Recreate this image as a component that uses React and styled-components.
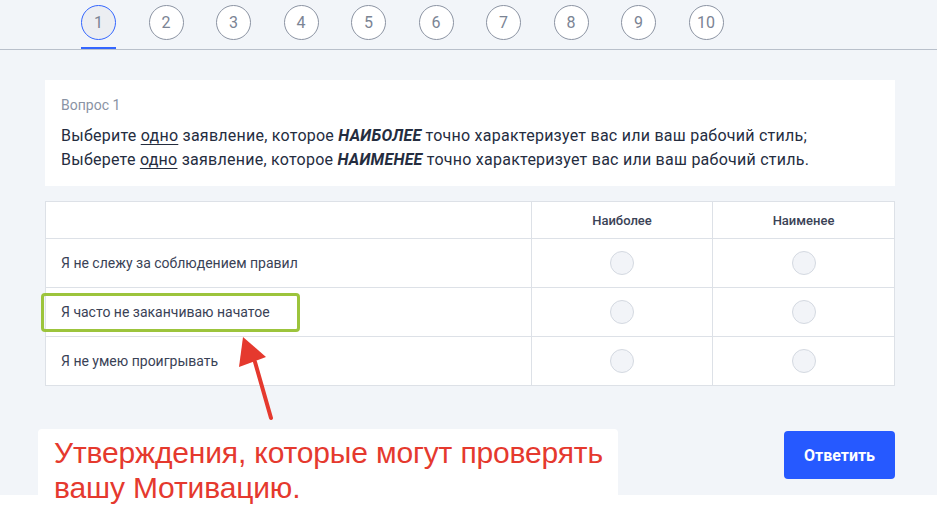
import styled, { createGlobalStyle } from "styled-components";

const GlobalStyle = createGlobalStyle`
  body {
    margin: 0;
    background: #ffffff;
    font-family: Roboto, "Noto Sans", sans-serif;
  }
`;

const Screen = styled.div`
  position: relative;
  height: 513px;
  overflow: hidden;
`;

const Page = styled.div`
  height: 495px;
  background: #f2f5f9;
`;

const StepNav = styled.nav`
  display: flex;
  gap: 32.5px;
  height: 50px;
  padding-left: 81px;
  border-bottom: 1px solid #b9c0cb;
  box-sizing: border-box;
  padding-top: 5px;
`;

const Step = styled.div`
  position: relative;
  width: 35px;
  height: 35px;
  box-sizing: border-box;
  border-radius: 50%;
  border: 1px solid ${(p) => (p.$active ? "#3466ff" : "#8c94a3")};
  background: ${(p) => (p.$active ? "#eceef2" : "#ffffff")};
  display: flex;
  align-items: center;
  justify-content: center;
  font-size: 16px;
  color: #7b8494;
  &::after {
    content: "";
    display: ${(p) => (p.$active ? "block" : "none")};
    position: absolute;
    left: -1px;
    right: -1px;
    bottom: -10px;
    height: 2px;
    background: #3466ff;
  }
`;

const Content = styled.main`
  padding: 30px 42px 0 45px;
`;

const QuestionCard = styled.section`
  background: #ffffff;
  padding: 17px 16px 14px;
`;

const QuestionLabel = styled.div`
  font-size: 14px;
  color: #8a93a4;
  margin-bottom: 11px;
`;

const QuestionLine = styled.p`
  margin: 0;
  font-size: 16px;
  line-height: 24px;
  font-weight: 400;
  color: #252d3f;
  letter-spacing: 0.25px;
  u {
    text-underline-offset: 3px;
  }
  em {
    font-weight: 700;
  }
`;

const Table = styled.table`
  width: 100%;
  margin-top: 15px;
  border-collapse: collapse;
  background: #ffffff;
  td, th {
    border: 1px solid #dde1e7;
    padding: 0;
  }
`;

const HeadCell = styled.th`
  height: 36px;
  font-size: 13px;
  font-weight: 500;
  color: #3a4256;
  text-align: center;
  width: ${(p) => p.$width || "auto"};
`;

const StatementCell = styled.td`
  height: 48px;
  padding-left: 15px !important;
  font-size: 14px;
  color: #3a4256;
`;

const RadioCell = styled.td`
  text-align: center;
  vertical-align: middle;
`;

const Radio = styled.span`
  display: inline-block;
  width: 24px;
  height: 24px;
  box-sizing: border-box;
  border-radius: 50%;
  border: 1px solid #d4d9e1;
  background: #f2f4f8;
  vertical-align: middle;
`;

const Footer = styled.div`
  display: flex;
  justify-content: space-between;
  align-items: flex-start;
  margin-top: 43px;
  margin-left: -7px;
`;

const Note = styled.div`
  width: 580px;
  height: 85px;
  box-sizing: border-box;
  background: #ffffff;
  border-radius: 4px 4px 0 0;
  padding: 6px 0 0 16px;
  font-family: "Liberation Sans", Arial, sans-serif;
  font-size: 30px;
  line-height: 35px;
  letter-spacing: -0.15px;
  color: #e5392e;
`;

const SubmitButton = styled.button`
  margin-top: 2px;
  width: 111px;
  height: 48px;
  border: none;
  border-radius: 4px;
  background: #2659ff;
  color: #ffffff;
  font-family: Roboto, sans-serif;
  font-size: 16px;
  font-weight: 700;
  cursor: pointer;
`;

const Highlight = styled.div`
  position: absolute;
  left: 41px;
  top: 293px;
  width: 259px;
  height: 39px;
  box-sizing: border-box;
  border: 3px solid #9cc43c;
  border-radius: 4px;
  pointer-events: none;
`;

const Arrow = styled.svg`
  position: absolute;
  left: 225px;
  top: 330px;
  pointer-events: none;
`;

const statements = [
  "Я не слежу за соблюдением правил",
  "Я часто не заканчиваю начатое",
  "Я не умею проигрывать",
];

const App = () => {
  return (
    <>
      <GlobalStyle />
      <Screen>
        <Page>
          <StepNav>
            {[1, 2, 3, 4, 5, 6, 7, 8, 9, 10].map((n) => (
              <Step key={n} $active={n === 1}>
                {n}
              </Step>
            ))}
          </StepNav>
          <Content>
            <QuestionCard>
              <QuestionLabel>Вопрос 1</QuestionLabel>
              <QuestionLine>
                Выберите <u>одно</u> заявление, которое <em>НАИБОЛЕЕ</em> точно
                характеризует вас или ваш рабочий стиль;
              </QuestionLine>
              <QuestionLine>
                Выберете <u>одно</u> заявление, которое <em>НАИМЕНЕЕ</em> точно
                характеризует вас или ваш рабочий стиль.
              </QuestionLine>
            </QuestionCard>
            <Table>
              <thead>
                <tr>
                  <HeadCell />
                  <HeadCell $width="180px">Наиболее</HeadCell>
                  <HeadCell $width="181px">Наименее</HeadCell>
                </tr>
              </thead>
              <tbody>
                {statements.map((s) => (
                  <tr key={s}>
                    <StatementCell>{s}</StatementCell>
                    <RadioCell>
                      <Radio />
                    </RadioCell>
                    <RadioCell>
                      <Radio />
                    </RadioCell>
                  </tr>
                ))}
              </tbody>
            </Table>
            <Footer>
              <Note>
                Утверждения, которые могут проверять
                <br />
                вашу Мотивацию.
              </Note>
              <SubmitButton>Ответить</SubmitButton>
            </Footer>
          </Content>
        </Page>
        <Highlight />
        <Arrow width="60" height="100" viewBox="0 0 60 100">
          <line x1="46" y1="88" x2="30" y2="32" stroke="#e5392e" strokeWidth="4" strokeLinecap="round" />
          <polygon points="18,7 14,37 41,27" fill="#e5392e" />
        </Arrow>
      </Screen>
    </>
  );
};

export default App;
